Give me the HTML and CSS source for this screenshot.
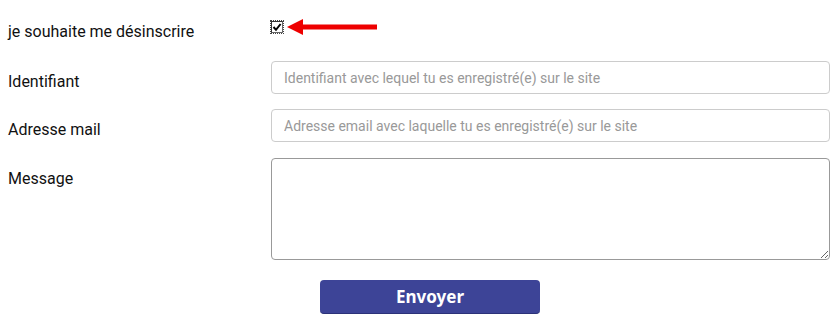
FILE: index.html
```html
<!DOCTYPE html>
<html lang="fr">
<head>
<meta charset="utf-8">
<title>Désinscription</title>
<link rel="stylesheet" href="styles.css">
</head>
<body>
<form class="form">
  <div class="row row-check">
    <label class="label" for="unsub">je souhaite me désinscrire</label>
    <div class="field check-field">
      <span class="checkbox" id="unsub">
        <svg width="10" height="10" viewBox="0 0 10 10"><path d="M1.5 5 L4 7.8 L8.6 2" fill="none" stroke="#000" stroke-width="2"/></svg>
      </span>
      <svg class="arrow" width="90" height="16" viewBox="0 0 90 16"><polygon points="0,8 16,0 16,5.5 90,5.5 90,10.5 16,10.5 16,16" fill="#ee0000"/></svg>
    </div>
  </div>
  <div class="row">
    <label class="label">Identifiant</label>
    <div class="field"><input class="input" type="text" placeholder="Identifiant avec lequel tu es enregistré(e) sur le site"></div>
  </div>
  <div class="row">
    <label class="label">Adresse mail</label>
    <div class="field"><input class="input" type="text" placeholder="Adresse email avec laquelle tu es enregistré(e) sur le site"></div>
  </div>
  <div class="row row-message">
    <label class="label">Message</label>
    <div class="field"><textarea class="textarea"></textarea></div>
  </div>
  <div class="actions">
    <button class="button" type="button">Envoyer</button>
  </div>
</form>
</body>
</html>
```

FILE: styles.css
```css
html, body {
  margin: 0;
  padding: 0;
  background: #fff;
}
body {
  font-family: Roboto, "Liberation Sans", sans-serif;
  color: #111;
}
.form {
  padding: 22px 0 0 8px;
  display: flex;
  flex-direction: column;
  gap: 15px;
}
.row {
  display: grid;
  grid-template-columns: 263px 559px;
  align-items: start;
}
.label {
  font-size: 16px;
  line-height: 19px;
  padding-top: 11px;
}
.row-check {
  margin-bottom: 5px;
}
.row-check .label {
  padding-top: 0;
}
.row-message {
  margin-top: 1px;
}
.check-field {
  display: flex;
  align-items: center;
  gap: 4px;
  margin-top: -3px;
  height: 16px;
}
.checkbox {
  width: 10px;
  height: 10px;
  border: 1px solid #666;
  border-top-color: #333;
  border-left-color: #333;
  outline: 1px dotted #444;
  outline-offset: 0;
  background: #fff;
  display: flex;
  box-sizing: content-box;
}
.arrow {
  display: block;
}
.input {
  box-sizing: border-box;
  width: 559px;
  height: 33px;
  border: 1px solid #ccc;
  border-radius: 4px;
  padding: 0 12px;
  font-family: Roboto, "Liberation Sans", sans-serif;
  font-size: 14px;
  color: #333;
  display: block;
  margin: 0;
}
.input::placeholder {
  color: #999;
}
.textarea {
  box-sizing: border-box;
  width: 559px;
  height: 102px;
  border: 1px solid #999;
  border-radius: 4px;
  padding: 6px 12px;
  font-family: Roboto, "Liberation Sans", sans-serif;
  font-size: 14px;
  display: block;
  margin: 0;
}
.actions {
  padding-left: 312px;
  margin-top: 5px;
}
.button {
  width: 220px;
  height: 34px;
  background: #3d4497;
  border: none;
  border-bottom: 1px solid #2c3278;
  border-radius: 4px;
  color: #fff;
  font-family: "Noto Sans", "Open Sans", sans-serif;
  font-weight: 700;
  font-size: 17px;
  padding: 0;
  line-height: 30px;
}
```
